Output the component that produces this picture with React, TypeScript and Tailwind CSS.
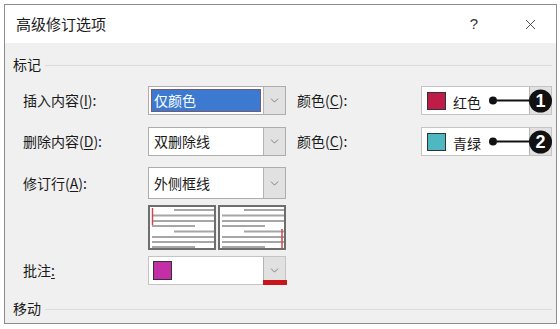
import { X, ChevronDown } from 'lucide-react';

const font = { fontFamily: '"Noto Sans CJK SC", "Microsoft YaHei", sans-serif' };

const Dropdown = () =>
<div className="w-[22px] h-full bg-[#e1e1e1] border-l border-[#b4b4b4] flex items-center justify-center">
    <ChevronDown size={13} strokeWidth={1.5} className="text-[#6a6a6a]" />
  </div>;

const Label = ({ text, u, w = 'w-[125px]' }: {text: string;u?: string;w?: string;}) =>
<div className={`${w} text-[14px] text-[#1a1a1a]`}>
    {text}
    {u &&
  <>
        (<span className="underline underline-offset-2">{u}</span>):
      </>
  }
  </div>;

const Callout = ({ n }: {n: string;}) =>
<div className="absolute right-[-1px] top-1/2 -translate-y-1/2 flex items-center">
    <span className="w-[8px] h-[8px] rounded-full bg-[#111]" />
    <span className="w-[32px] h-[2px] bg-[#111]" />
    <span className="w-[23px] h-[23px] rounded-full bg-[#111] text-white text-[18px] font-bold leading-none flex items-center justify-center" style={{ fontFamily: '"Liberation Sans", Arial, sans-serif' }}>
      {n}
    </span>
  </div>;

const ColorBox = ({ color, name, n }: {color: string;name: string;n: string;}) =>
<div className="relative w-[131px] h-[29px] bg-white border border-[#c4c4c4] flex items-center">
    <span className={`ml-[5px] w-[19px] h-[18px] border border-[#333] ${color}`} />
    <span className="ml-[7px] text-[14px] text-[#1a1a1a] mt-[3px]">{name}</span>
    <div className="ml-auto h-full"><Dropdown /></div>
    <Callout n={n} />
  </div>;

const Select = ({ value, highlight, h = 'h-[29px]' }: {value: string;highlight?: boolean;h?: string;}) =>
<div className={`w-[138px] ${h} bg-white border border-[#adadad] flex items-stretch`}>
    <div className="flex-1 p-[2px] flex">
      {highlight ?
    <div className="flex-1 bg-[#3b7ad0] text-white text-[14px] pl-[2px] flex items-center border border-[#7a5a6a]">{value}</div> :

    <div className="flex-1 text-[14px] text-[#1a1a1a] pl-[3px] flex items-center">{value}</div>
    }
    </div>
    <Dropdown />
  </div>;

const Preview = ({ side }: {side: 'left' | 'right';}) => {
  const lines: [number, number, number][] = [
  [3, 24, 66], [8.5, 2, 66], [14, 2, 66], [19, 2, 45],
  [24.5, 24, 66], [30, 2, 66], [35, 2, 66], [40, 2, 45]];

  return (
    <svg width="68" height="45" className="bg-white border-[2px] border-[#6e6e6e] box-border block">
      {lines.map(([y, x1, x2], i) =>
      <line key={i} x1={x1} x2={x2} y1={y} y2={y} stroke="#a6a6a6" strokeWidth="2" />
      )}
      {side === 'left' ?
      <line x1="2.5" x2="2.5" y1="1" y2="18" stroke="#d0464e" strokeWidth="1.5" /> :
      <line x1="62" x2="62" y1="22" y2="41" stroke="#d0464e" strokeWidth="1.5" />}
    </svg>);

};

const Section = ({ title }: {title: string;}) =>
<div className="flex items-center gap-[4px] pl-[8px] pr-[4px]">
    <span className="text-[14px] text-[#1a1a1a]">{title}</span>
    <span className="flex-1 h-px bg-[#dcdcdc] mt-[1px]" />
  </div>;

export default function App() {
  return (
    <div className="w-[560px] h-[329px] bg-white p-[4px] pb-[5px]" style={font}>
      <div className="w-[553px] h-[320px] border border-[#8c8c8c] flex flex-col overflow-hidden">
        {/* Title bar */}
        <div className="h-[38px] bg-white flex items-center pl-[11px] pr-[17px] shrink-0">
          <span className="text-[15px] text-[#1a1a1a]">高级修订选项</span>
          <span className="ml-auto mr-[44px] text-[15px] text-[#333]" style={{ fontFamily: '"Liberation Sans", sans-serif' }}>?</span>
          <X size={17} strokeWidth={1.2} className="text-[#333]" />
        </div>

        {/* Body */}
        <div className="flex-1 bg-[#f0f0f0] pt-[11px] overflow-hidden">
          <Section title="标记" />

          <div className="pl-[18px] mt-[11px] flex flex-col">
            <div className="flex items-center">
              <Label text="插入内容" u="I" />
              <Select value="仅颜色" highlight />
              <div className="w-[11px]" />
              <Label text="颜色" u="C" w="w-[124px]" />
              <ColorBox color="bg-[#c01c48]" name="红色" n="1" />
            </div>

            <div className="flex items-center mt-[12px]">
              <Label text="删除内容" u="D" />
              <Select value="双删除线" />
              <div className="w-[11px]" />
              <Label text="颜色" u="C" w="w-[124px]" />
              <ColorBox color="bg-[#4db8c0]" name="青绿" n="2" />
            </div>

            <div className="flex items-center mt-[11px]">
              <Label text="修订行" u="A" />
              <Select value="外侧框线" h="h-[32px]" />
            </div>

            <div className="flex mt-[6px] pl-[125px] gap-[2px]">
              <Preview side="left" />
              <Preview side="right" />
            </div>

            <div className="flex items-center mt-[6px]">
              <div className="w-[125px] text-[14px] text-[#1a1a1a]">批注<span className="underline underline-offset-2">:</span></div>
              <div className="relative w-[138px] h-[29px] bg-white border border-[#c4c4c4] flex items-center">
                <span className="ml-[4px] w-[19px] h-[19px] border border-[#333] bg-[#c22fa6]" />
                <div className="ml-auto h-full"><Dropdown /></div>
                <span className="absolute right-[-2px] bottom-[-1px] w-[24px] h-[5px] bg-[#c8151b]" />
              </div>
            </div>
          </div>

          <div className="mt-[13px]">
            <Section title="移动" />
          </div>
        </div>
      </div>
    </div>);

}
